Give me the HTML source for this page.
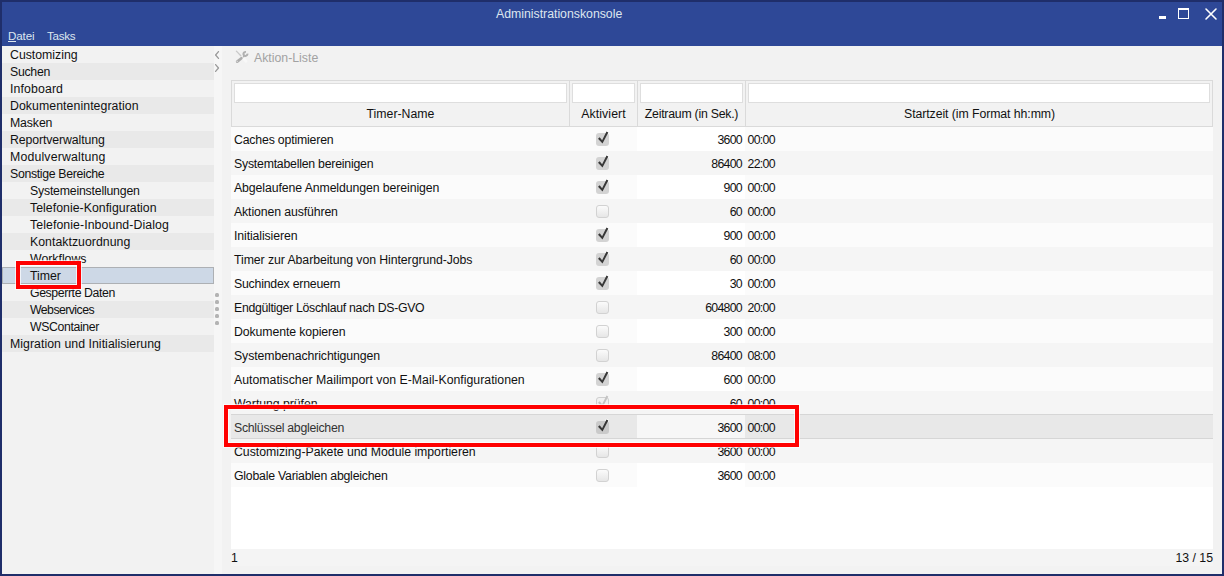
<!DOCTYPE html><html><head><meta charset="utf-8"><title>Administrationskonsole</title><style>
*{margin:0;padding:0;box-sizing:border-box}
html,body{width:1224px;height:576px;overflow:hidden;background:#f0f0f0}
body{position:relative;font-family:"Liberation Sans",sans-serif;font-size:12.3px;color:#111}
.a{position:absolute}
#win{left:0;top:0;width:1224px;height:576px;background:#1f2e6a}
#tb{left:2px;top:2px;width:1220px;height:44px;background:#2e4897}
.tt{color:#dde6ef;white-space:nowrap;line-height:14px}
#content{left:2px;top:46px;width:1220px;height:528px;background:#f2f2f2}
.sr{left:2px;width:212px;height:17px;line-height:19px;white-space:nowrap}
.sr.d{background:#e9e9e9}
.sr.sel{background:#cdd8e6;border:1px solid #adb0b4;line-height:17px}
#split{left:214px;top:46px;width:8px;height:528px;background:#f6f6f6}
.dot{left:215px;width:4px;height:4px;border-radius:1.5px;background:#b3b3b3}
#hdr{left:231px;top:80px;width:982px;height:47px;background:#f2f2f2;border:1px solid #dadada}
.sep{top:80px;width:1px;height:47px;background:#dadada}
.inp{top:83px;height:20px;background:#fff;border:1px solid #dedede}
.hl{top:104px;height:22px;line-height:20px;text-align:center;white-space:nowrap}
#body{left:231px;top:127px;width:982px;height:422px;background:#fff}
.row{left:231px;width:982px;height:24px;line-height:24px;white-space:nowrap}
.row.o{background:#fbfbfb}
.row.e{background:#f5f5f5}
.zc{left:637px;width:108px;height:24px;background:#fff}
.cb{left:596px;width:13px;height:13px;border-radius:3px;background:#d3d3d3}
.cb.u{background:linear-gradient(#fbfbfb,#e6e6e6);border:1px solid #d2d2d2}
.cb.dd{background:#f1f1f1;border:1px solid #cfcfcf}
.ck{left:592px;width:18px;height:18px}
.txt{left:234px;height:24px;line-height:26px;white-space:nowrap}
.num{left:637px;width:105px;text-align:right;height:24px;line-height:26px;letter-spacing:-0.7px}
.tim{left:747.5px;height:24px;line-height:26px;letter-spacing:-0.7px}
#foot{left:231px;top:549px;width:982px;height:17px;background:#f4f4f4}
.red{border:4px solid #ff0000;box-shadow:0 0 0 1px rgba(255,255,255,0.7), inset 0 0 0 1px rgba(255,255,255,0.7)}
</style></head><body>
<div id="win" class="a"></div><div id="tb" class="a"></div>
<div class="a tt" style="left:496px;top:7px;letter-spacing:-0.010px">Administrationskonsole</div>
<div class="a" style="left:1159px;top:16px;width:7px;height:3px;background:#fff"></div>
<div class="a" style="left:1178px;top:8px;width:11px;height:11px;border:1px solid #fff;border-top-width:2px"></div>
<svg class="a" style="left:1204px;top:7px" width="14" height="14" viewBox="0 0 14 14"><path d="M2 2 L12 12 M12 2 L2 12" stroke="#fff" stroke-width="1.6" stroke-linecap="round"/></svg>
<div class="a tt" style="left:8px;top:29px;font-size:11.6px;letter-spacing:-0.1px">Datei</div><div class="a" style="left:8px;top:41px;width:8px;height:1px;background:#dde6ef"></div>
<div class="a tt" style="left:47px;top:29px;font-size:11.6px;letter-spacing:-0.3px">Tasks</div>
<div id="content" class="a"></div>
<div class="a sr" style="top:46px;padding-left:8px">Customizing</div>
<div class="a sr d" style="top:63px;padding-left:8px;letter-spacing:-0.280px">Suchen</div>
<div class="a sr" style="top:80px;padding-left:8px;letter-spacing:0.125px">Infoboard</div>
<div class="a sr d" style="top:97px;padding-left:8px;letter-spacing:0.070px">Dokumentenintegration</div>
<div class="a sr" style="top:114px;padding-left:8px;letter-spacing:-0.120px">Masken</div>
<div class="a sr d" style="top:131px;padding-left:8px;letter-spacing:-0.107px">Reportverwaltung</div>
<div class="a sr" style="top:148px;padding-left:8px;letter-spacing:0.171px">Modulverwaltung</div>
<div class="a sr d" style="top:165px;padding-left:8px;letter-spacing:-0.325px">Sonstige Bereiche</div>
<div class="a sr" style="top:182px;padding-left:28px;letter-spacing:-0.200px">Systemeinstellungen</div>
<div class="a sr d" style="top:199px;padding-left:28px;letter-spacing:0.036px">Telefonie-Konfiguration</div>
<div class="a sr" style="top:216px;padding-left:28px;letter-spacing:0.087px">Telefonie-Inbound-Dialog</div>
<div class="a sr d" style="top:233px;padding-left:28px;letter-spacing:0.027px">Kontaktzuordnung</div>
<div class="a sr" style="top:250px;padding-left:28px">Workflows</div>
<div class="a sr sel" style="top:267px;padding-left:27px;letter-spacing:-0.050px">Timer</div>
<div class="a sr" style="top:284px;padding-left:28px;letter-spacing:-0.400px">Gesperrte Daten</div>
<div class="a sr d" style="top:301px;padding-left:28px;letter-spacing:-0.560px">Webservices</div>
<div class="a sr" style="top:318px;padding-left:28px;letter-spacing:-0.380px">WSContainer</div>
<div class="a sr d" style="top:335px;padding-left:8px;letter-spacing:0.043px">Migration und Initialisierung</div>
<div id="split" class="a"></div>
<div class="a dot" style="top:293px"></div>
<div class="a dot" style="top:300px"></div>
<div class="a dot" style="top:307px"></div>
<div class="a dot" style="top:314px"></div>
<div class="a dot" style="top:321px"></div>
<svg class="a" style="left:213px;top:49px" width="8" height="26" viewBox="0 0 8 26"><path d="M5.5 2.6 L2.6 6 L5.5 9.4 M2.6 15.6 L5.5 19 L2.6 22.4" fill="none" stroke="#9a9a9a" stroke-width="1.3" stroke-linecap="round" stroke-linejoin="round"/></svg>
<svg class="a" style="left:233px;top:48px" width="18" height="18" viewBox="0 0 18 18"><line x1="9.6" y1="9.6" x2="13" y2="13.2" stroke="#f8f8f8" stroke-width="3" stroke-linecap="round"/><line x1="3.4" y1="3.1" x2="7.8" y2="7.7" stroke="#c9c9c9" stroke-width="1.3" stroke-linecap="round"/><line x1="8.4" y1="10.2" x2="4.2" y2="13.6" stroke="#adadad" stroke-width="2.7" stroke-linecap="round"/><circle cx="4.2" cy="13.5" r="0.7" fill="#dcdcdc"/><path d="M14.4 5.6 A2.0 2.0 0 1 1 12.9 4.0" fill="none" stroke="#b0b0b0" stroke-width="2.0"/><line x1="11.2" y1="7.4" x2="10.6" y2="8.6" stroke="#b0b0b0" stroke-width="1.7" stroke-linecap="round"/></svg>
<div class="a" style="left:254px;top:51px;color:#a2a2a2;line-height:14px;white-space:nowrap">Aktion-Liste</div>
<div id="hdr" class="a"></div>
<div class="a sep" style="left:569px"></div>
<div class="a sep" style="left:637px"></div>
<div class="a sep" style="left:745px"></div>
<div class="a inp" style="left:234px;width:333px"></div>
<div class="a inp" style="left:572px;width:63px"></div>
<div class="a inp" style="left:640px;width:103px"></div>
<div class="a inp" style="left:748px;width:462px"></div>
<div class="a hl" style="left:232px;width:337px"><span style="">Timer-Name</span></div>
<div class="a hl" style="left:570px;width:67px"><span style="letter-spacing:0.100px">Aktiviert</span></div>
<div class="a hl" style="left:638px;width:107px"><span style="letter-spacing:-0.235px">Zeitraum (in Sek.)</span></div>
<div class="a hl" style="left:746px;width:467px"><span style="letter-spacing:-0.077px">Startzeit (im Format hh:mm)</span></div>
<div id="body" class="a"></div>
<div class="a row o" style="top:127px"></div>
<div class="a zc" style="top:127px"></div>
<div class="a ck" style="top:129px"><svg width="18" height="18" viewBox="0 0 18 18"><polygon points="6.0,9.7 7.7,8.2 10.1,11.3 14.5,2.5 16.3,3.4 10.5,14.4" fill="#fff" stroke="#fff" stroke-width="1.6" stroke-linejoin="round"/></svg></div>
<div class="a cb" style="top:133px"></div>
<div class="a ck" style="top:129px"><svg width="18" height="18" viewBox="0 0 18 18"><polygon points="6.0,9.7 7.7,8.2 10.1,11.3 14.5,2.5 16.3,3.4 10.5,14.4" fill="#383838"/></svg></div>
<div class="a txt" style="top:127px;letter-spacing:-0.181px">Caches optimieren</div>
<div class="a num" style="top:127px">3600</div>
<div class="a tim" style="top:127px">00:00</div>
<div class="a row e" style="top:151px"></div>
<div class="a ck" style="top:153px"><svg width="18" height="18" viewBox="0 0 18 18"><polygon points="6.0,9.7 7.7,8.2 10.1,11.3 14.5,2.5 16.3,3.4 10.5,14.4" fill="#fff" stroke="#fff" stroke-width="1.6" stroke-linejoin="round"/></svg></div>
<div class="a cb" style="top:157px"></div>
<div class="a ck" style="top:153px"><svg width="18" height="18" viewBox="0 0 18 18"><polygon points="6.0,9.7 7.7,8.2 10.1,11.3 14.5,2.5 16.3,3.4 10.5,14.4" fill="#383838"/></svg></div>
<div class="a txt" style="top:151px;letter-spacing:-0.225px">Systemtabellen bereinigen</div>
<div class="a num" style="top:151px">86400</div>
<div class="a tim" style="top:151px">22:00</div>
<div class="a row o" style="top:175px"></div>
<div class="a zc" style="top:175px"></div>
<div class="a ck" style="top:177px"><svg width="18" height="18" viewBox="0 0 18 18"><polygon points="6.0,9.7 7.7,8.2 10.1,11.3 14.5,2.5 16.3,3.4 10.5,14.4" fill="#fff" stroke="#fff" stroke-width="1.6" stroke-linejoin="round"/></svg></div>
<div class="a cb" style="top:181px"></div>
<div class="a ck" style="top:177px"><svg width="18" height="18" viewBox="0 0 18 18"><polygon points="6.0,9.7 7.7,8.2 10.1,11.3 14.5,2.5 16.3,3.4 10.5,14.4" fill="#383838"/></svg></div>
<div class="a txt" style="top:175px;letter-spacing:-0.097px">Abgelaufene Anmeldungen bereinigen</div>
<div class="a num" style="top:175px">900</div>
<div class="a tim" style="top:175px">00:00</div>
<div class="a row e" style="top:199px"></div>
<div class="a cb u" style="top:205px"></div>
<div class="a txt" style="top:199px;letter-spacing:-0.118px">Aktionen ausführen</div>
<div class="a num" style="top:199px">60</div>
<div class="a tim" style="top:199px">00:00</div>
<div class="a row o" style="top:223px"></div>
<div class="a zc" style="top:223px"></div>
<div class="a ck" style="top:225px"><svg width="18" height="18" viewBox="0 0 18 18"><polygon points="6.0,9.7 7.7,8.2 10.1,11.3 14.5,2.5 16.3,3.4 10.5,14.4" fill="#fff" stroke="#fff" stroke-width="1.6" stroke-linejoin="round"/></svg></div>
<div class="a cb" style="top:229px"></div>
<div class="a ck" style="top:225px"><svg width="18" height="18" viewBox="0 0 18 18"><polygon points="6.0,9.7 7.7,8.2 10.1,11.3 14.5,2.5 16.3,3.4 10.5,14.4" fill="#383838"/></svg></div>
<div class="a txt" style="top:223px;letter-spacing:-0.108px">Initialisieren</div>
<div class="a num" style="top:223px">900</div>
<div class="a tim" style="top:223px">00:00</div>
<div class="a row e" style="top:247px"></div>
<div class="a ck" style="top:249px"><svg width="18" height="18" viewBox="0 0 18 18"><polygon points="6.0,9.7 7.7,8.2 10.1,11.3 14.5,2.5 16.3,3.4 10.5,14.4" fill="#fff" stroke="#fff" stroke-width="1.6" stroke-linejoin="round"/></svg></div>
<div class="a cb" style="top:253px"></div>
<div class="a ck" style="top:249px"><svg width="18" height="18" viewBox="0 0 18 18"><polygon points="6.0,9.7 7.7,8.2 10.1,11.3 14.5,2.5 16.3,3.4 10.5,14.4" fill="#383838"/></svg></div>
<div class="a txt" style="top:247px;letter-spacing:-0.073px">Timer zur Abarbeitung von Hintergrund-Jobs</div>
<div class="a num" style="top:247px">60</div>
<div class="a tim" style="top:247px">00:00</div>
<div class="a row o" style="top:271px"></div>
<div class="a zc" style="top:271px"></div>
<div class="a ck" style="top:273px"><svg width="18" height="18" viewBox="0 0 18 18"><polygon points="6.0,9.7 7.7,8.2 10.1,11.3 14.5,2.5 16.3,3.4 10.5,14.4" fill="#fff" stroke="#fff" stroke-width="1.6" stroke-linejoin="round"/></svg></div>
<div class="a cb" style="top:277px"></div>
<div class="a ck" style="top:273px"><svg width="18" height="18" viewBox="0 0 18 18"><polygon points="6.0,9.7 7.7,8.2 10.1,11.3 14.5,2.5 16.3,3.4 10.5,14.4" fill="#383838"/></svg></div>
<div class="a txt" style="top:271px;letter-spacing:-0.212px">Suchindex erneuern</div>
<div class="a num" style="top:271px">30</div>
<div class="a tim" style="top:271px">00:00</div>
<div class="a row e" style="top:295px"></div>
<div class="a cb u" style="top:301px"></div>
<div class="a txt" style="top:295px;letter-spacing:-0.300px">Endgültiger Löschlauf nach DS-GVO</div>
<div class="a num" style="top:295px">604800</div>
<div class="a tim" style="top:295px">20:00</div>
<div class="a row o" style="top:319px"></div>
<div class="a zc" style="top:319px"></div>
<div class="a cb u" style="top:325px"></div>
<div class="a txt" style="top:319px;letter-spacing:-0.106px">Dokumente kopieren</div>
<div class="a num" style="top:319px">300</div>
<div class="a tim" style="top:319px">00:00</div>
<div class="a row e" style="top:343px"></div>
<div class="a cb u" style="top:349px"></div>
<div class="a txt" style="top:343px;letter-spacing:-0.096px">Systembenachrichtigungen</div>
<div class="a num" style="top:343px">86400</div>
<div class="a tim" style="top:343px">08:00</div>
<div class="a row o" style="top:367px"></div>
<div class="a zc" style="top:367px"></div>
<div class="a ck" style="top:369px"><svg width="18" height="18" viewBox="0 0 18 18"><polygon points="6.0,9.7 7.7,8.2 10.1,11.3 14.5,2.5 16.3,3.4 10.5,14.4" fill="#fff" stroke="#fff" stroke-width="1.6" stroke-linejoin="round"/></svg></div>
<div class="a cb" style="top:373px"></div>
<div class="a ck" style="top:369px"><svg width="18" height="18" viewBox="0 0 18 18"><polygon points="6.0,9.7 7.7,8.2 10.1,11.3 14.5,2.5 16.3,3.4 10.5,14.4" fill="#383838"/></svg></div>
<div class="a txt" style="top:367px;letter-spacing:0.004px">Automatischer Mailimport von E-Mail-Konfigurationen</div>
<div class="a num" style="top:367px">600</div>
<div class="a tim" style="top:367px">00:00</div>
<div class="a row e" style="top:391px"></div>
<div class="a cb dd" style="top:397px"></div>
<div class="a ck" style="top:393px"><svg width="18" height="18" viewBox="0 0 18 18"><polygon points="6.0,9.7 7.7,8.2 10.1,11.3 14.5,2.5 16.3,3.4 10.5,14.4" fill="#c4c4c4"/></svg></div>
<div class="a txt" style="top:391px;letter-spacing:-0.062px">Wartung prüfen</div>
<div class="a num" style="top:391px">60</div>
<div class="a tim" style="top:391px">00:00</div>
<div class="a row" style="top:414px;height:25px;background:#e8e8e8;border-top:1px solid #d6d6d6;border-bottom:1px solid #d6d6d6"></div>
<div class="a" style="left:637px;top:415px;width:108px;height:23px;background:#f7f7f7"></div>
<div class="a ck" style="top:417px"><svg width="18" height="18" viewBox="0 0 18 18"><polygon points="6.0,9.7 7.7,8.2 10.1,11.3 14.5,2.5 16.3,3.4 10.5,14.4" fill="#fff" stroke="#fff" stroke-width="1.6" stroke-linejoin="round"/></svg></div>
<div class="a cb" style="top:421px;background:#cacaca"></div>
<div class="a ck" style="top:417px"><svg width="18" height="18" viewBox="0 0 18 18"><polygon points="6.0,9.7 7.7,8.2 10.1,11.3 14.5,2.5 16.3,3.4 10.5,14.4" fill="#383838"/></svg></div>
<div class="a txt" style="top:415px;letter-spacing:-0.274px;color:#333">Schlüssel abgleichen</div>
<div class="a num" style="top:415px">3600</div>
<div class="a tim" style="top:415px">00:00</div>
<div class="a row e" style="top:439px"></div>
<div class="a cb u" style="top:445px"></div>
<div class="a txt" style="top:439px;letter-spacing:-0.025px">Customizing-Pakete und Module importieren</div>
<div class="a num" style="top:439px">3600</div>
<div class="a tim" style="top:439px">00:00</div>
<div class="a row o" style="top:463px"></div>
<div class="a zc" style="top:463px"></div>
<div class="a cb u" style="top:469px"></div>
<div class="a txt" style="top:463px;letter-spacing:-0.222px">Globale Variablen abgleichen</div>
<div class="a num" style="top:463px">3600</div>
<div class="a tim" style="top:463px">00:00</div>
<div id="foot" class="a"></div>
<div class="a" style="left:231px;top:550px;line-height:17px">1</div>
<div class="a" style="left:1100px;top:550px;width:113px;text-align:right;line-height:17px">13 / 15</div>
<div class="a red" style="left:16px;top:261px;width:65px;height:28px"></div>
<div class="a red" style="left:224px;top:405px;width:575px;height:42px"></div>
</body></html>
